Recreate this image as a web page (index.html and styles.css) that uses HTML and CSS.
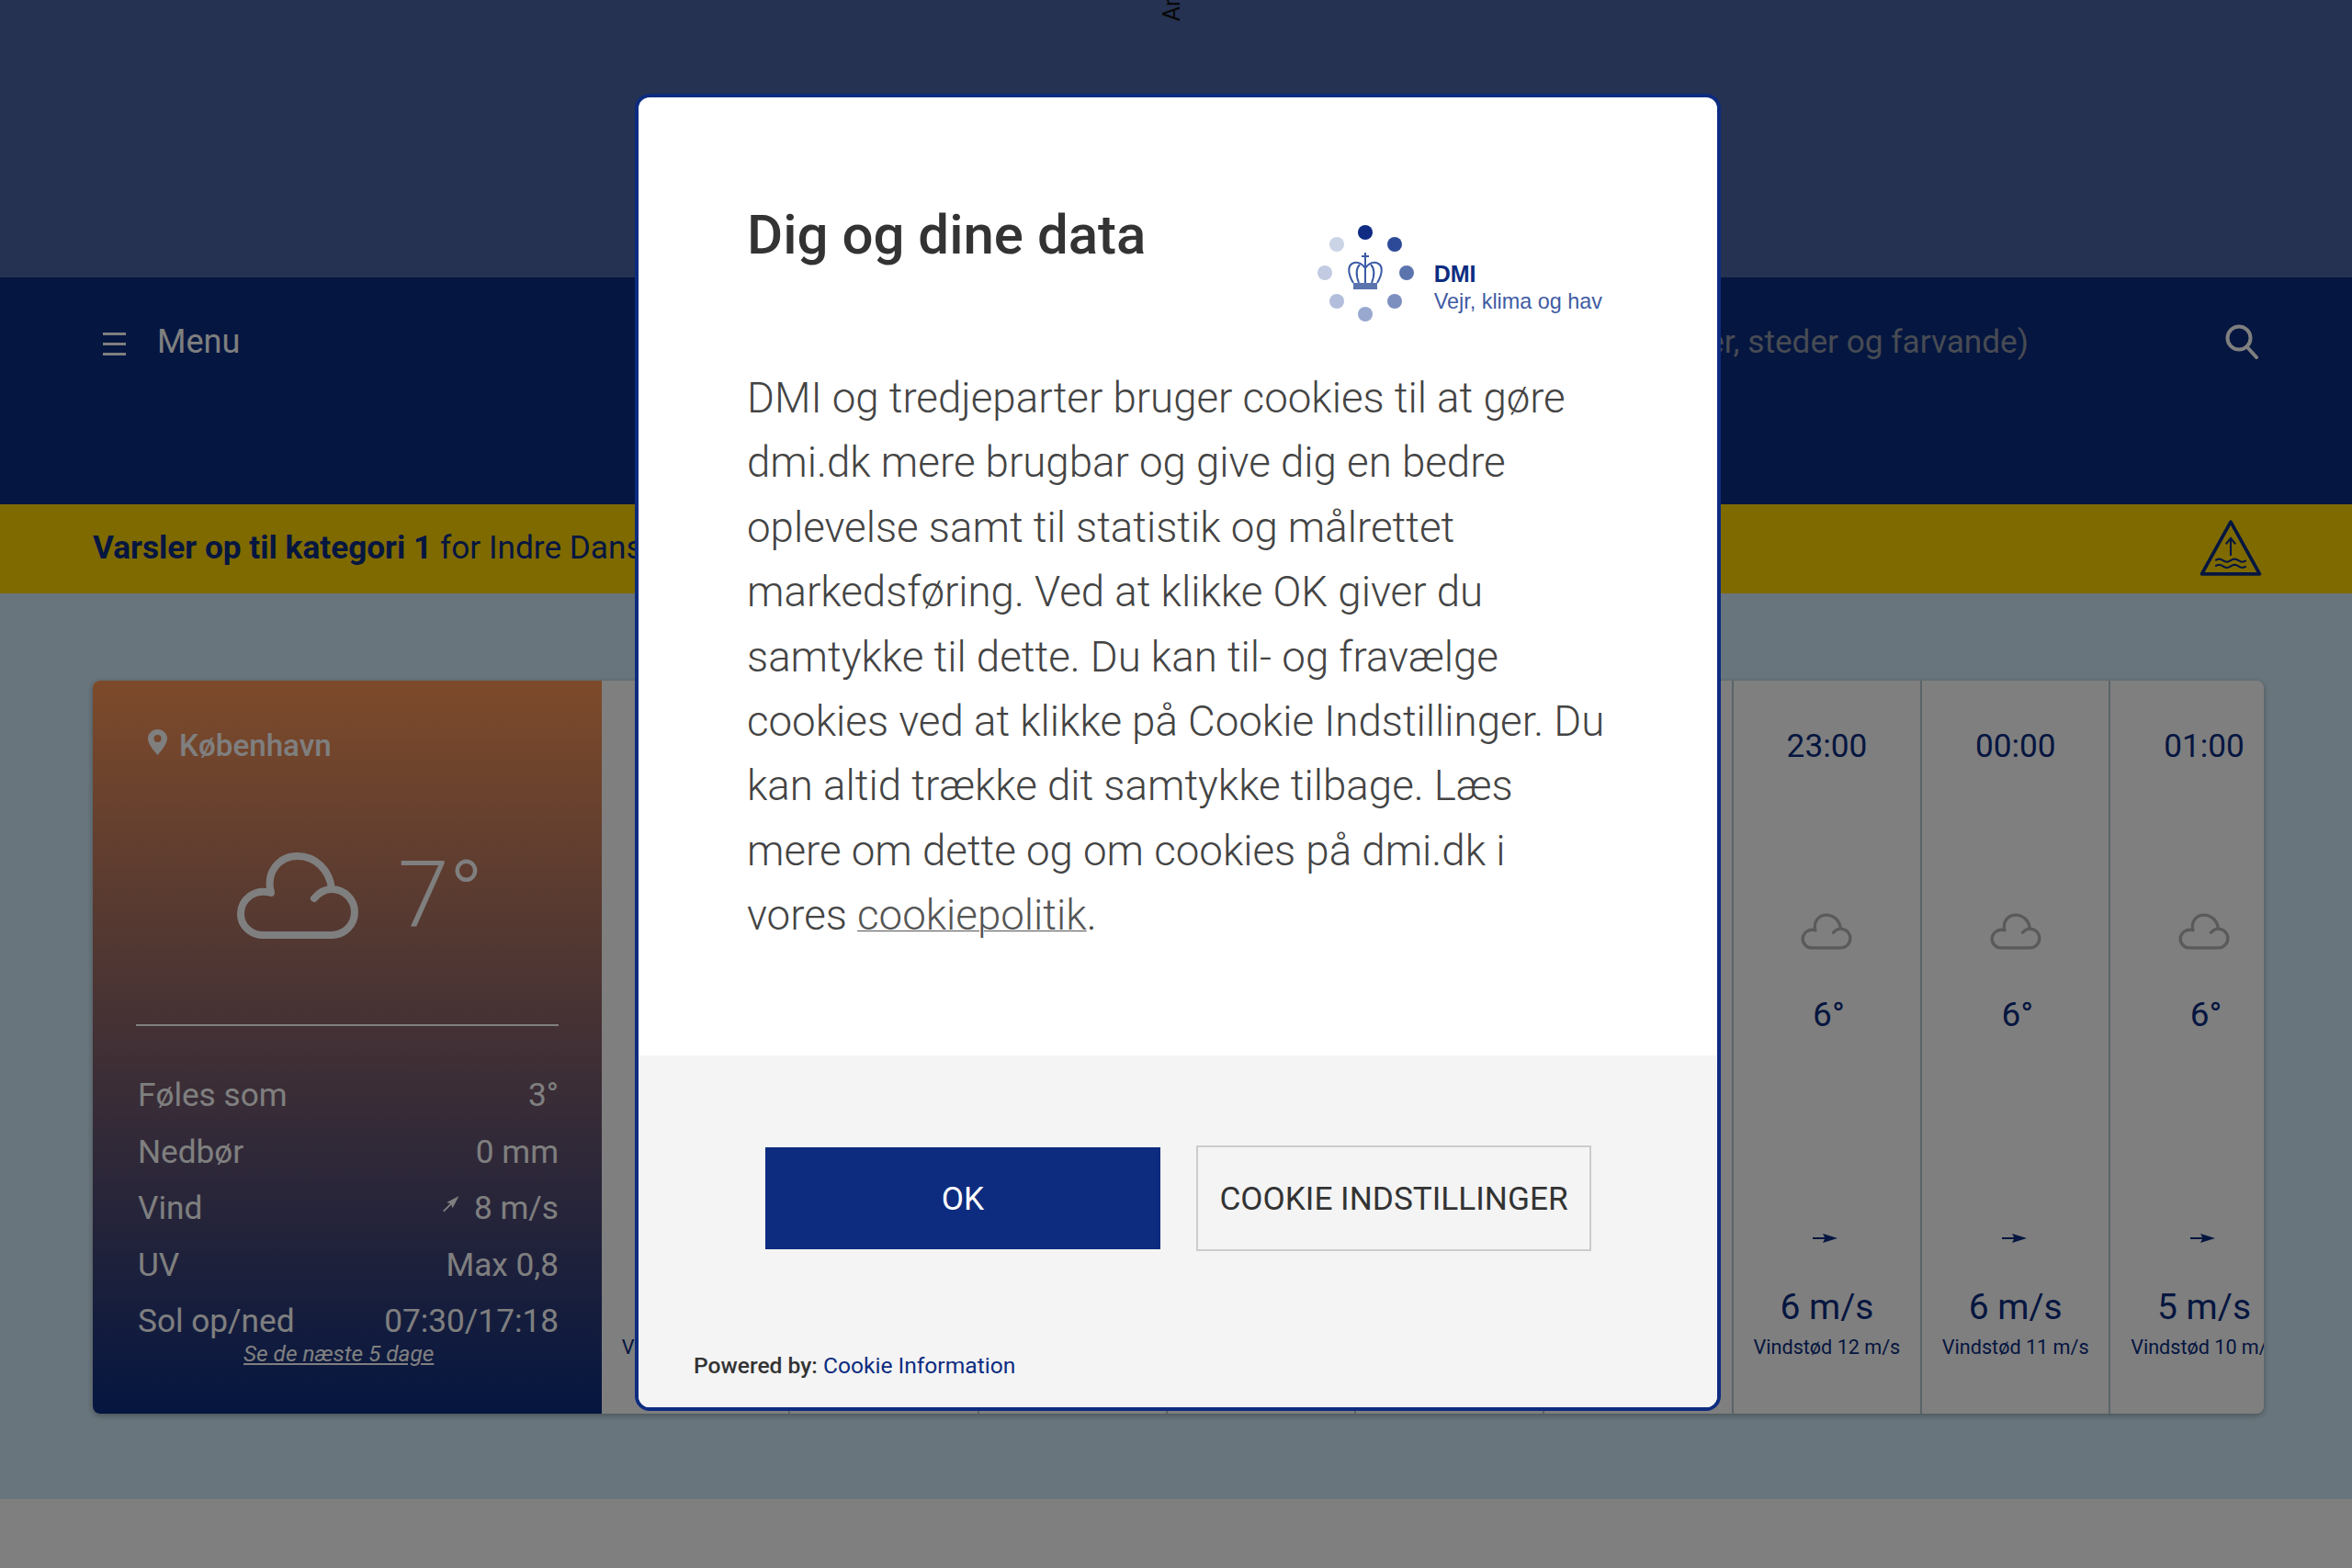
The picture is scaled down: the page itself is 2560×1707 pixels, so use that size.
FILE: index.html
```html
<!DOCTYPE html>
<html lang="da">
<head>
  <meta charset="utf-8">
  <title>DMI</title>
  <link rel="stylesheet" href="styles.css">
</head>
<body>
  <svg class="defs" width="0" height="0">
    <symbol id="cloud" viewBox="0 0 134 96">
      <path d="M85 51C90 45 97 41 104 41A25 25 0 0 1 104 91H30C16 91 5 81 5 68C5 52 20 40 38 45C32 22 47 5 67 5C86 5 102 20 104 41" fill="none" stroke="currentColor" stroke-width="8" stroke-linecap="round" stroke-linejoin="round"/>
    </symbol>
    <symbol id="arrow" viewBox="0 0 27 12">
      <path d="M0 5H13L11 1L27 6L11 11L13 7H0Z" fill="currentColor"/>
    </symbol>
  </svg>

  <div class="top-band">
    <span class="ad-label">Annonce</span>
  </div>

  <header class="nav">
    <div class="menu">
      <span class="burger"><i></i><i></i><i></i></span>
      <span>Menu</span>
    </div>
    <div class="search">
      <span class="placeholder">Søg (byer, steder og farvande)</span>
      <svg class="search-icon" viewBox="0 0 36 38">
        <circle cx="15" cy="15" r="12.5" fill="none" stroke="currentColor" stroke-width="4"/>
        <path d="M24 25L34 36" stroke="currentColor" stroke-width="4" stroke-linecap="round"/>
      </svg>
    </div>
  </header>

  <div class="alert">
    <p><strong>Varsler op til kategori 1</strong> for Indre Danske farvande</p>
    <svg class="alert-icon" viewBox="0 0 66 60">
      <path d="M33 3L63 57H3Z" fill="none" stroke="currentColor" stroke-width="3.5" stroke-linejoin="round"/>
      <path d="M33 38V21M28 26L33 20L38 26" fill="none" stroke="currentColor" stroke-width="2"/>
      <path d="M17 43Q21 40 25 43T33 43T41 43T49 43M17 49Q21 46 25 49T33 49T41 49T49 49" fill="none" stroke="currentColor" stroke-width="2"/>
    </svg>
  </div>

  <main class="content">
    <section class="weather">
      <div class="now">
        <div class="place">
          <svg class="pin" viewBox="0 0 21 28">
            <path fill-rule="evenodd" d="M10.5 0C16.3 0 21 4.5 21 10C21 16 14 24 10.5 28C7 24 0 16 0 10C0 4.5 4.7 0 10.5 0ZM10.5 6A4 4 0 1 0 10.5 14A4 4 0 1 0 10.5 6Z" fill="currentColor"/>
          </svg>
          <span>København</span>
        </div>
        <div class="now-main">
          <svg class="cloud-big"><use href="#cloud"/></svg>
          <span class="now-temp">7°</span>
        </div>
        <ul class="facts">
          <li><span>Føles som</span><span>3°</span></li>
          <li><span>Nedbør</span><span>0 mm</span></li>
          <li><span>Vind</span><span class="wind-now"><svg class="arrow-small"><use href="#arrow"/></svg>8 m/s</span></li>
          <li><span>UV</span><span>Max 0,8</span></li>
          <li><span>Sol op/ned</span><span>07:30/17:18</span></li>
        </ul>
        <a class="next-days" href="#">Se de næste 5 dage</a>
      </div>

      <div class="hours">
        <div class="hour"><div class="time">17:00</div><svg class="cloud-small"><use href="#cloud"/></svg><div class="temp">7°</div><svg class="arrow"><use href="#arrow"/></svg><div class="wind">8 m/s</div><div class="gust">Vindstød 14 m/s</div></div>
        <div class="hour"><div class="time">18:00</div><svg class="cloud-small"><use href="#cloud"/></svg><div class="temp">7°</div><svg class="arrow"><use href="#arrow"/></svg><div class="wind">8 m/s</div><div class="gust">Vindstød 14 m/s</div></div>
        <div class="hour"><div class="time">19:00</div><svg class="cloud-small"><use href="#cloud"/></svg><div class="temp">7°</div><svg class="arrow"><use href="#arrow"/></svg><div class="wind">7 m/s</div><div class="gust">Vindstød 13 m/s</div></div>
        <div class="hour"><div class="time">20:00</div><svg class="cloud-small"><use href="#cloud"/></svg><div class="temp">7°</div><svg class="arrow"><use href="#arrow"/></svg><div class="wind">7 m/s</div><div class="gust">Vindstød 13 m/s</div></div>
        <div class="hour"><div class="time">21:00</div><svg class="cloud-small"><use href="#cloud"/></svg><div class="temp">6°</div><svg class="arrow"><use href="#arrow"/></svg><div class="wind">7 m/s</div><div class="gust">Vindstød 12 m/s</div></div>
        <div class="hour"><div class="time">22:00</div><svg class="cloud-small"><use href="#cloud"/></svg><div class="temp">6°</div><svg class="arrow"><use href="#arrow"/></svg><div class="wind">6 m/s</div><div class="gust">Vindstød 12 m/s</div></div>
        <div class="hour"><div class="time">23:00</div><svg class="cloud-small"><use href="#cloud"/></svg><div class="temp">6°</div><svg class="arrow"><use href="#arrow"/></svg><div class="wind">6 m/s</div><div class="gust">Vindstød 12 m/s</div></div>
        <div class="hour"><div class="time">00:00</div><svg class="cloud-small"><use href="#cloud"/></svg><div class="temp">6°</div><svg class="arrow"><use href="#arrow"/></svg><div class="wind">6 m/s</div><div class="gust">Vindstød 11 m/s</div></div>
        <div class="hour"><div class="time">01:00</div><svg class="cloud-small"><use href="#cloud"/></svg><div class="temp">6°</div><svg class="arrow"><use href="#arrow"/></svg><div class="wind">5 m/s</div><div class="gust">Vindstød 10 m/s</div></div>
      </div>
    </section>
  </main>

  <footer class="page-footer"></footer>

  <div class="overlay"></div>

  <div class="consent">
    <div class="consent-top">
      <div class="consent-head">
        <h1>Dig og dine data</h1>
        <div class="logo">
          <svg class="logo-mark" viewBox="0 0 106 108">
            <circle cx="53" cy="9" r="8" fill="#0f2c82"/>
            <circle cx="85" cy="22" r="8" fill="#2d4a98"/>
            <circle cx="98" cy="53" r="8" fill="#5c74ae"/>
            <circle cx="85" cy="84" r="8" fill="#7c8fbf"/>
            <circle cx="53" cy="98" r="8" fill="#98a8cf"/>
            <circle cx="22" cy="84" r="8" fill="#b2bedb"/>
            <circle cx="9" cy="53" r="8" fill="#c2cbe2"/>
            <circle cx="22" cy="22" r="8" fill="#cbd3e6"/>
            <g fill="none" stroke="#3a5aa5" stroke-width="2">
              <path d="M40 64C34 54 33 44 41 42C47 41 51 45 53 48C55 45 59 41 65 42C73 44 72 54 66 64"/>
              <path d="M46 64C43 56 43 48 47 44M60 64C63 56 63 48 59 44M53 41V64M53 31V41M49 35H57"/>
            </g>
            <rect x="40" y="64" width="26" height="7" fill="#5c74ae"/>
          </svg>
          <div class="logo-text">
            <strong>DMI</strong>
            <span>Vejr, klima og hav</span>
          </div>
        </div>
      </div>
      <p class="consent-text">DMI og tredjeparter bruger cookies til at gøre dmi.dk mere brugbar og give dig en bedre oplevelse samt til statistik og målrettet markedsføring. Ved at klikke OK giver du samtykke til dette. Du kan til- og fravælge cookies ved at klikke på Cookie Indstillinger. Du kan altid trække dit samtykke tilbage. Læs mere om dette og om cookies på dmi.dk i vores <a href="#">cookiepolitik</a>.</p>
    </div>
    <div class="consent-bottom">
      <div class="buttons">
        <button class="btn btn-ok">OK</button>
        <button class="btn btn-settings">COOKIE INDSTILLINGER</button>
      </div>
      <div class="powered">Powered by: <a href="#">Cookie Information</a></div>
    </div>
  </div>
</body>
</html>
```

FILE: styles.css
```css
* {
  box-sizing: border-box;
}

html, body {
  margin: 0;
  height: 1707px;
  overflow: hidden;
}

body {
  position: relative;
  font-family: Roboto, "Liberation Sans", sans-serif;
  font-size: 35.2px;
  color: #0a2c80;
  background: #fff;
}

.defs {
  position: absolute;
}

.top-band {
  position: relative;
  height: 302px;
  background: #4a64a4;
}

.ad-label {
  position: absolute;
  left: 1265px;
  bottom: 279px;
  font-size: 25px;
  line-height: 22px;
  color: #111;
  writing-mode: vertical-rl;
  transform: rotate(180deg);
}

/* nav */
.nav {
  display: flex;
  justify-content: space-between;
  height: 247px;
  padding: 46px 102px 0 112px;
  background: #0a2c80;
  color: #fff;
}

.menu {
  display: flex;
  align-items: flex-start;
  gap: 34px;
  font-size: 36px;
  line-height: 49px;
}

.burger {
  display: flex;
  flex-direction: column;
  gap: 8px;
  width: 25px;
  padding-top: 14px;
}

.burger i {
  display: block;
  height: 3px;
  background: #fff;
}

.search {
  display: flex;
  align-items: flex-start;
  gap: 214px;
  line-height: 48px;
}

.placeholder {
  color: #8f96a6;
}

.search-icon {
  width: 36px;
  height: 38px;
  margin-top: 5px;
  color: #fff;
}

/* yellow alert bar */
.alert {
  display: flex;
  justify-content: space-between;
  align-items: center;
  height: 97px;
  padding: 0 97px 0 101px;
  background: #ffd500;
}

.alert p {
  margin: -4px 0 0;
}

.alert-icon {
  width: 70px;
  height: 63px;
  margin-top: -2px;
}

/* main */
.content {
  height: 986px;
  padding: 95px 96px 0 101px;
  background: #d1ebf8;
}

.weather {
  display: flex;
  height: 798px;
  border-radius: 8px;
  overflow: hidden;
  background: #fff;
  box-shadow: 0 2px 6px rgba(0, 0, 0, 0.3);
}

.now {
  position: relative;
  flex: 0 0 554px;
  padding: 50px 47px 0;
  color: #fff;
  background: linear-gradient(180deg, #fb9555 0%, #0a2c80 100%);
}

.place {
  display: flex;
  align-items: center;
  gap: 13px;
  margin-left: 13px;
  font-size: 33.2px;
  font-weight: 500;
  line-height: 41px;
}

.pin {
  width: 21px;
  height: 28px;
  margin-top: -8px;
}

.now-main {
  display: flex;
  align-items: flex-start;
  gap: 42px;
  height: 188px;
  margin-top: 95px;
  margin-left: 109px;
}

.cloud-big {
  width: 134px;
  height: 96px;
}

.now-temp {
  font-size: 100px;
  font-weight: 300;
  line-height: 96px;
  margin-top: -1px;
}

.facts {
  list-style: none;
  margin: 0;
  padding: 45px 0 0 2px;
  border-top: 2px solid #fff;
}

.facts li {
  display: flex;
  justify-content: space-between;
  height: 61.5px;
  line-height: 61.5px;
}

.wind-now {
  display: flex;
  align-items: center;
  gap: 13px;
}

.arrow-small {
  width: 24px;
  height: 11px;
  margin-top: -10px;
  transform: rotate(-45deg);
}

.next-days {
  position: absolute;
  left: 164px;
  top: 719px;
  font-size: 24.4px;
  font-style: italic;
  line-height: 28px;
  color: #fff;
}

.hours {
  display: flex;
  flex: none;
  width: 1850px;
}

.hour {
  display: flex;
  flex: 0 0 205.3px;
  flex-direction: column;
  align-items: center;
  padding-top: 47px;
  border-right: 2px solid #b4c8d4;
  text-align: center;
  white-space: nowrap;
}

.time {
  line-height: 48px;
}

.cloud-small {
  width: 56px;
  height: 40px;
  margin-top: 158px;
  color: #b4b4b4;
}

.temp {
  padding-left: 4px;
  margin-top: 47px;
  font-size: 37px;
  line-height: 48px;
}

.arrow {
  width: 27px;
  height: 12px;
  margin-top: 213px;
  margin-right: 3px;
}

.wind {
  margin-top: 45px;
  font-size: 39px;
  line-height: 48px;
}

.gust {
  margin-top: 5px;
  font-size: 21.6px;
  line-height: 30px;
}

.page-footer {
  height: 75px;
  background: #fff;
}

.overlay {
  position: absolute;
  inset: 0;
  background: rgba(0, 0, 0, 0.5);
}

/* cookie dialog */
.consent {
  position: absolute;
  left: 691px;
  top: 102px;
  display: flex;
  flex-direction: column;
  width: 1182px;
  height: 1434px;
  border: 4px solid #0d2c80;
  border-radius: 16px;
  overflow: hidden;
  background: #fff;
  color: #444;
}

.consent-top {
  height: 1043px;
  padding: 97px 116px 0 118px;
}

.consent-head {
  display: flex;
  justify-content: space-between;
  align-items: flex-start;
}

.consent-head h1 {
  margin: 18px 0 0;
  font-size: 60px;
  font-weight: 500;
  line-height: 70px;
  color: #333;
}

.logo {
  display: flex;
  align-items: flex-start;
  gap: 22px;
  margin: 41px 9px 0 0;
  color: #0d2c80;
}

.logo-mark {
  width: 106px;
  height: 108px;
}

.logo-text {
  display: flex;
  flex-direction: column;
  margin-top: 38px;
  font-family: "Liberation Sans", sans-serif;
}

.logo-text strong {
  font-size: 25px;
  line-height: 32px;
}

.logo-text span {
  font-size: 23.4px;
  line-height: 28px;
  color: #3f5ba3;
}

.consent-text {
  margin: 47px 0 0;
  font-size: 45.65px;
  font-weight: 300;
  line-height: 70.4px;
}

.consent-text a {
  color: #555;
  text-decoration-thickness: 1px;
}

.consent-bottom {
  flex: 1;
  padding: 98px 0 0 60px;
  background: #f4f4f4;
}

.buttons {
  display: flex;
  align-items: center;
  gap: 39px;
  padding-left: 78px;
}

.btn {
  width: 430px;
  font-family: inherit;
  font-size: 35.2px;
  color: #333;
}

.btn-ok {
  height: 111px;
  border: 0;
  background: #0d2c80;
  color: #fff;
}

.btn-settings {
  height: 115px;
  border: 2px solid #ccc;
  background: #f4f4f4;
}

.powered {
  margin-top: 109px;
  font-size: 24.6px;
  font-weight: 500;
  line-height: 32px;
  color: #333;
}

.powered a {
  font-weight: 400;
  color: #0d2c80;
  text-decoration: none;
}
```
